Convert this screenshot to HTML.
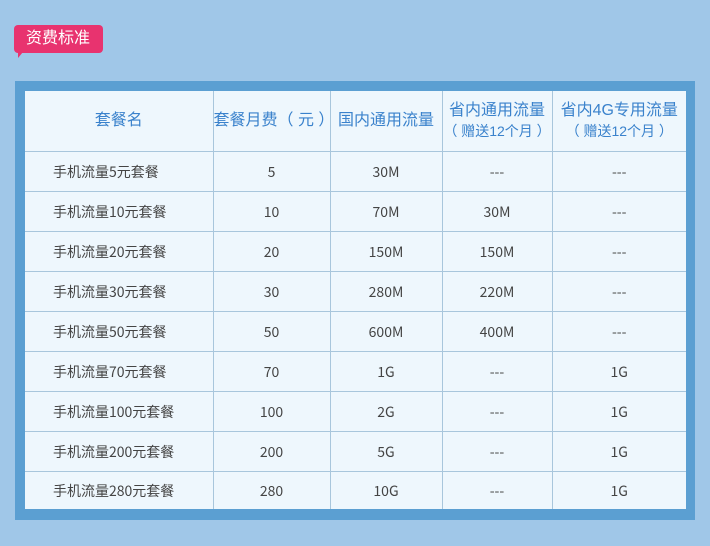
<!DOCTYPE html>
<html><head><meta charset="utf-8"><style>
html,body{margin:0;padding:0;}
body{width:710px;height:546px;background:#a0c7e8;position:relative;overflow:hidden;font-family:"Liberation Sans","Noto Sans CJK SC",sans-serif;}
.badge{position:absolute;left:14px;top:25px;width:89px;height:28px;background:#e8336f;border-radius:4px;color:#fff;font-size:16px;line-height:28px;text-indent:12px;}
.badge:after{content:"";position:absolute;left:4px;top:27px;border-left:5px solid #e8336f;border-bottom:6px solid transparent;border-right:3px solid transparent;}
.frame{position:absolute;left:15px;top:81px;width:680px;height:439px;background:#5b9fd2;}
table{position:absolute;left:25px;top:91px;width:661px;border-collapse:collapse;background:#eef7fd;table-layout:fixed;}
td{border:1px solid #a8c6dc;text-align:center;font-size:14px;color:#444;height:39px;padding:0;font-family:"Noto Sans CJK SC","Liberation Sans",sans-serif;}
tr:first-child td{border-top:none;}
tr td:first-child{border-left:none;text-align:left;padding-left:28px;}
tr td:last-child{border-right:none;}
tr:last-child td{border-bottom:none;height:37px;}
th{font-weight:normal;color:#3a82cc;font-size:16px;height:60px;border:1px solid #a8c6dc;border-top:none;padding:0;line-height:20px;white-space:nowrap;overflow:visible;}
th:first-child{border-left:none;}
th:last-child{border-right:none;}
th small{font-size:14px;}
</style></head><body>
<div class="badge">资费标准</div>
<div class="frame"></div>
<table>
<colgroup><col style="width:188px"><col style="width:117px"><col style="width:112px"><col style="width:110px"><col style="width:134px"></colgroup>
<tr><th>套餐名</th><th>套餐月费（ 元 ）</th><th>国内通用流量</th><th>省内通用流量<br><small>（ 赠送12个月 ）</small></th><th>省内4G专用流量<br><small>（ 赠送12个月 ）</small></th></tr>
<tr><td>手机流量5元套餐</td><td>5</td><td>30M</td><td>---</td><td>---</td></tr>
<tr><td>手机流量10元套餐</td><td>10</td><td>70M</td><td>30M</td><td>---</td></tr>
<tr><td>手机流量20元套餐</td><td>20</td><td>150M</td><td>150M</td><td>---</td></tr>
<tr><td>手机流量30元套餐</td><td>30</td><td>280M</td><td>220M</td><td>---</td></tr>
<tr><td>手机流量50元套餐</td><td>50</td><td>600M</td><td>400M</td><td>---</td></tr>
<tr><td>手机流量70元套餐</td><td>70</td><td>1G</td><td>---</td><td>1G</td></tr>
<tr><td>手机流量100元套餐</td><td>100</td><td>2G</td><td>---</td><td>1G</td></tr>
<tr><td>手机流量200元套餐</td><td>200</td><td>5G</td><td>---</td><td>1G</td></tr>
<tr><td>手机流量280元套餐</td><td>280</td><td>10G</td><td>---</td><td>1G</td></tr>
</table>
</body></html>
